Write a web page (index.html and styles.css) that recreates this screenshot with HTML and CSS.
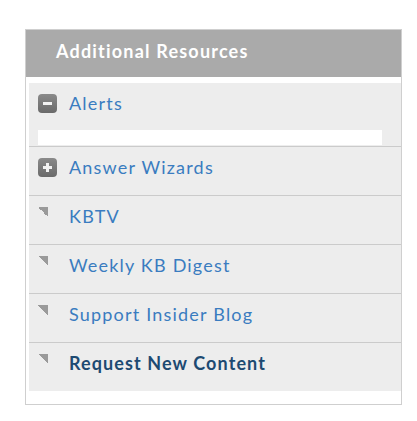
FILE: index.html
```html
<!DOCTYPE html>
<html lang="en">

<head>
    <meta charset="UTF-8">
    <meta name="viewport" content="width=device-width, initial-scale=1.0">
    <title>Additional Resources</title>
    <link rel="stylesheet" href="styles.css">
</head>

<body>

    <div class="resources">
        <div class="resources-title">Additional Resources</div>
        <ul class="resource-list">
            <li class="item open">
                <div class="item-head">
                    <span class="toggle minus"></span>
                    <a href="#">Alerts</a>
                </div>
                <div class="item-body"></div>
            </li>
            <li class="item">
                <div class="item-head">
                    <span class="toggle plus"></span>
                    <a href="#">Answer Wizards</a>
                </div>
            </li>
            <li class="item">
                <div class="item-head">
                    <span class="corner"></span>
                    <a href="#">KBTV</a>
                </div>
            </li>
            <li class="item">
                <div class="item-head">
                    <span class="corner"></span>
                    <a href="#">Weekly KB Digest</a>
                </div>
            </li>
            <li class="item">
                <div class="item-head">
                    <span class="corner"></span>
                    <a href="#">Support Insider Blog</a>
                </div>
            </li>
            <li class="item">
                <div class="item-head">
                    <span class="corner"></span>
                    <a href="#" class="strong">Request New Content</a>
                </div>
            </li>
        </ul>
    </div>

</body>

</html>
```

FILE: styles.css
```css
body {
    margin: 0;
    padding: 29px 0 0 25px;
    background-color: #fff;
    font-family: Lato, "Open Sans", sans-serif;
}

.resources {
    width: 375px;
    border: 1px solid #cfcfcf;
    padding-bottom: 13px;
}

.resources-title {
    height: 47px;
    line-height: 43px;
    padding-left: 30px;
    background-color: #aaaaaa;
    color: #fff;
    font-size: 18px;
    font-weight: bold;
    letter-spacing: 1.2px;
}

.resource-list {
    list-style: none;
    margin: 6px 0 0 3px;
    padding: 0;
    background-color: #ededed;
}

.item {
    border-bottom: 1px solid #cbcbcb;
}

.item:last-child {
    border-bottom: none;
}

.item-head {
    display: flex;
    align-items: flex-start;
    height: 48px;
    padding-left: 9px;
    box-sizing: border-box;
    padding-top: 11px;
}

.item.open .item-head {
    height: 47px;
}

.item-head a {
    margin-left: 12px;
    margin-top: -1px;
    color: #3a7cc0;
    font-size: 18px;
    line-height: 20px;
    letter-spacing: 1.2px;
    text-decoration: none;
}

.item-head a.strong {
    color: #1d4a72;
    font-weight: bold;
    letter-spacing: 1.1px;
}

.item-body {
    height: 15px;
    margin: 0 19px 1px 9px;
    background-color: #fff;
}

.toggle {
    position: relative;
    flex: none;
    width: 19px;
    height: 19px;
    border-radius: 4px;
    background: linear-gradient(#8a8a8a, #6a6a6a);
}

.toggle::before,
.toggle::after {
    content: "";
    position: absolute;
    background-color: #f2f2f2;
}

.toggle::before {
    left: 5px;
    top: 8px;
    width: 9px;
    height: 3px;
}

.plus::after {
    left: 8px;
    top: 5px;
    width: 3px;
    height: 9px;
}

.corner {
    flex: none;
    width: 10px;
    height: 10px;
    margin-right: 9px;
    background: linear-gradient(to bottom left, #9a9a9a 50%, transparent 50%);
}
```
